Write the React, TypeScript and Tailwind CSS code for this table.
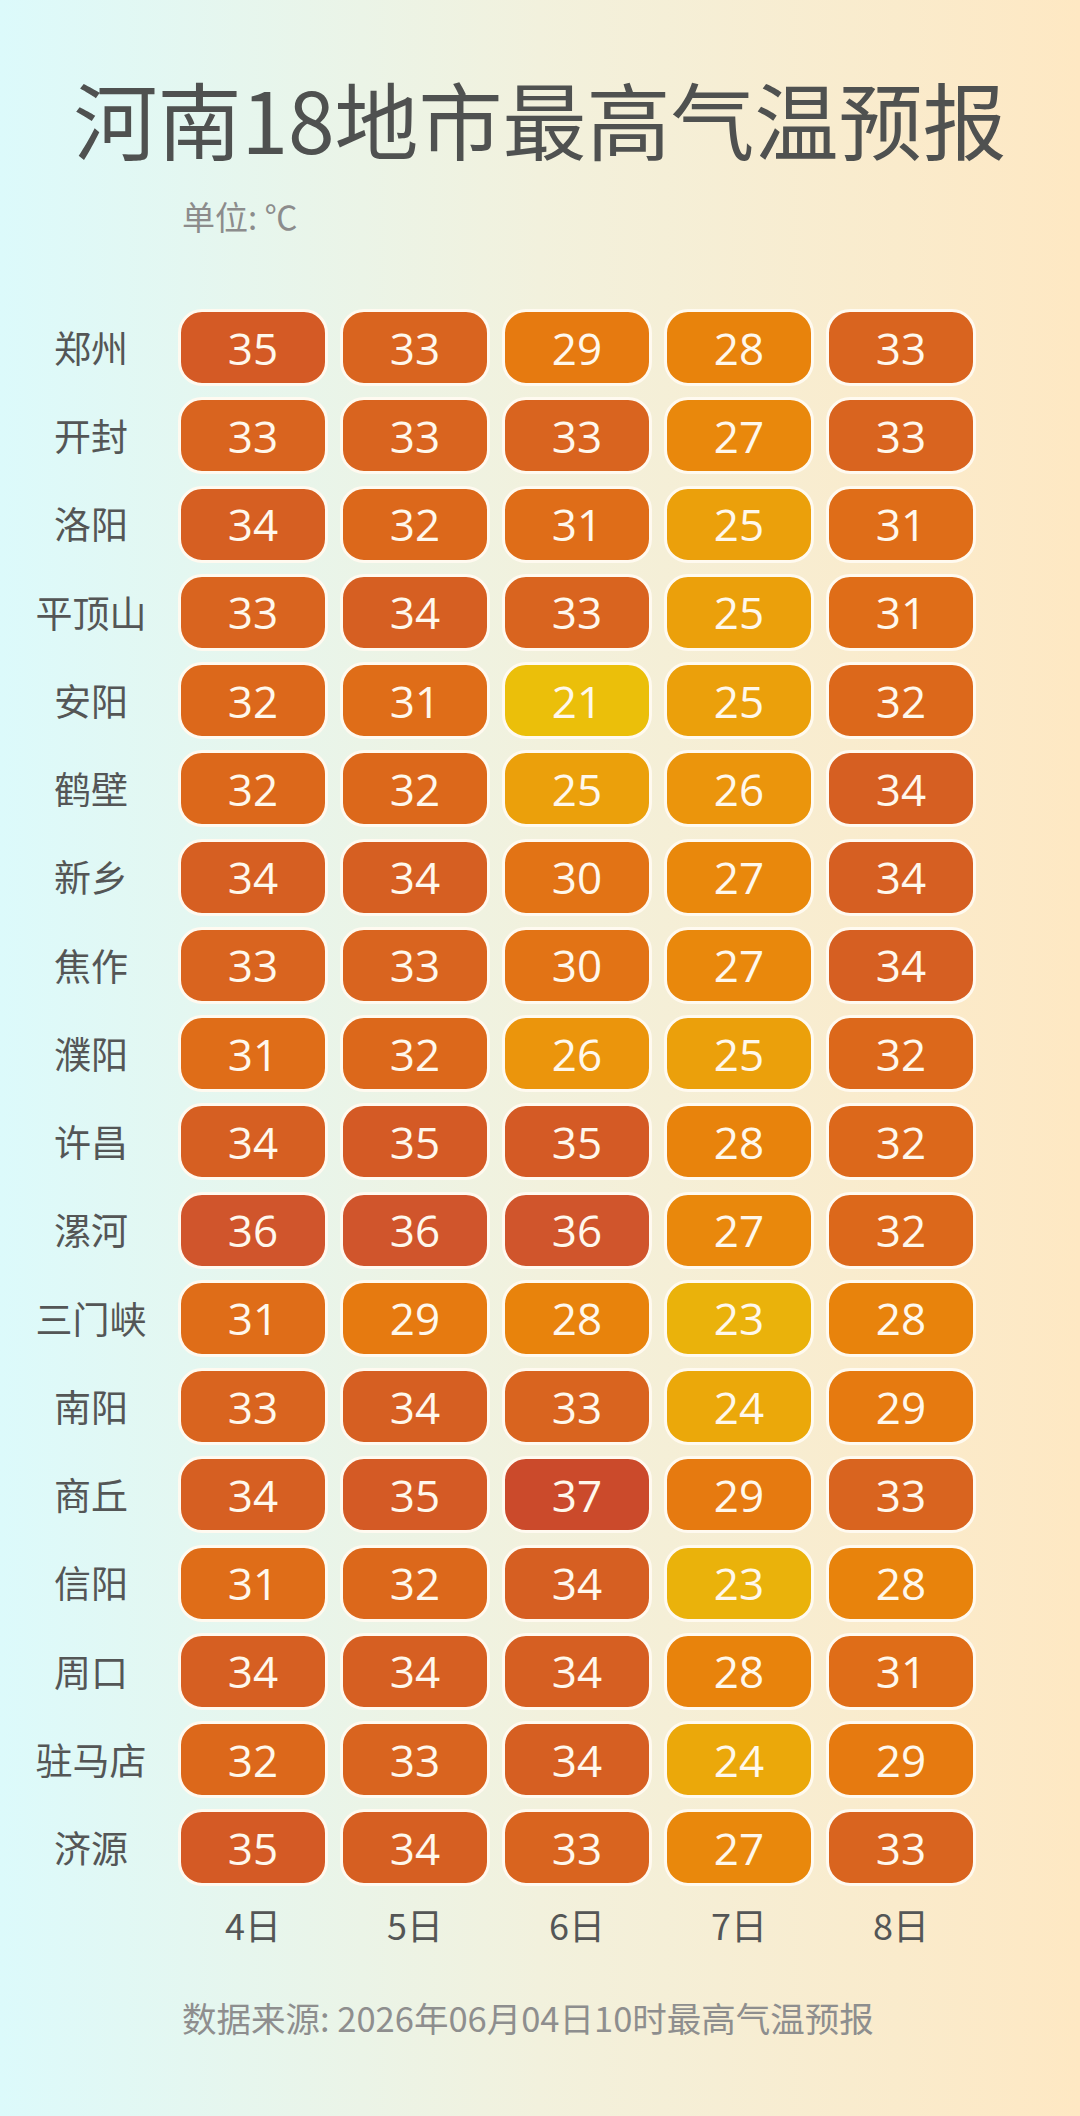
import React from "react";

const COLOR: Record<number, string> = {
  21: "bg-[#ebbf0a]",
  23: "bg-[#eab20b]",
  24: "bg-[#eba80a]",
  25: "bg-[#eba00b]",
  26: "bg-[#eb950c]",
  27: "bg-[#e9880c]",
  28: "bg-[#e8830c]",
  29: "bg-[#e67a10]",
  30: "bg-[#e27315]",
  31: "bg-[#df6d18]",
  32: "bg-[#dc681b]",
  33: "bg-[#d9641f]",
  34: "bg-[#d65f22]",
  35: "bg-[#d45a25]",
  36: "bg-[#d0552c]",
  37: "bg-[#cb4a2b]",
};

const DATA: [string, number[]][] = [
  ["郑州", [35, 33, 29, 28, 33]],
  ["开封", [33, 33, 33, 27, 33]],
  ["洛阳", [34, 32, 31, 25, 31]],
  ["平顶山", [33, 34, 33, 25, 31]],
  ["安阳", [32, 31, 21, 25, 32]],
  ["鹤壁", [32, 32, 25, 26, 34]],
  ["新乡", [34, 34, 30, 27, 34]],
  ["焦作", [33, 33, 30, 27, 34]],
  ["濮阳", [31, 32, 26, 25, 32]],
  ["许昌", [34, 35, 35, 28, 32]],
  ["漯河", [36, 36, 36, 27, 32]],
  ["三门峡", [31, 29, 28, 23, 28]],
  ["南阳", [33, 34, 33, 24, 29]],
  ["商丘", [34, 35, 37, 29, 33]],
  ["信阳", [31, 32, 34, 23, 28]],
  ["周口", [34, 34, 34, 28, 31]],
  ["驻马店", [32, 33, 34, 24, 29]],
  ["济源", [35, 34, 33, 27, 33]],
];

const DAYS = ["4日", "5日", "6日", "7日", "8日"];

const CJK = { fontFamily: '"Noto Sans CJK SC", "Noto Sans", sans-serif' };
const NUM = { fontFamily: '"Open Sans", "Noto Sans", sans-serif' };

export default function App() {
  return (
    <div
      className="w-[1080px] h-[2116px] bg-linear-to-r from-[#dcfafb] via-[#f2f1dd] to-[#fee8c3] overflow-hidden"
      style={CJK}
    >
      <div className="pt-[76px] text-center text-[84px] leading-[84px] h-[160px] text-[#4f5150]">
        河南18地市最高气温预报
      </div>
      <div className="mt-[40px] pl-[182px] text-[33px] leading-[32px] text-[#8c8c8c]">
        单位: ℃
      </div>
      <div className="mt-[77px] pl-[16px] grid grid-cols-[150px_repeat(5,150px)] gap-x-[12px] gap-y-[11.25px]">
        {DATA.map(([city, temps]) => (
          <React.Fragment key={city}>
            <div className="h-[77px] flex items-center justify-center text-[37px] text-[#545656]">
              {city}
            </div>
            {temps.map((t, i) => (
              <div
                key={i}
                className={`h-[77px] rounded-[24px] border-[3px] border-[#fffaf0] flex items-center justify-center text-[44px] text-[#fff8ec] ${COLOR[t]}`}
                style={NUM}
              >
                {t}
              </div>
            ))}
          </React.Fragment>
        ))}
        <div className="h-[40px]" />
        {DAYS.map((d) => (
          <div
            key={d}
            className="mt-[6px] h-[40px] flex items-center justify-center text-[36px] text-[#545656]"
          >
            {d}
          </div>
        ))}
      </div>
      <div className="mt-[55px] pl-[182px] text-[34.5px] leading-[36px] text-[#8e8e8e]">
        数据来源: 2026年06月04日10时最高气温预报
      </div>
    </div>
  );
}
